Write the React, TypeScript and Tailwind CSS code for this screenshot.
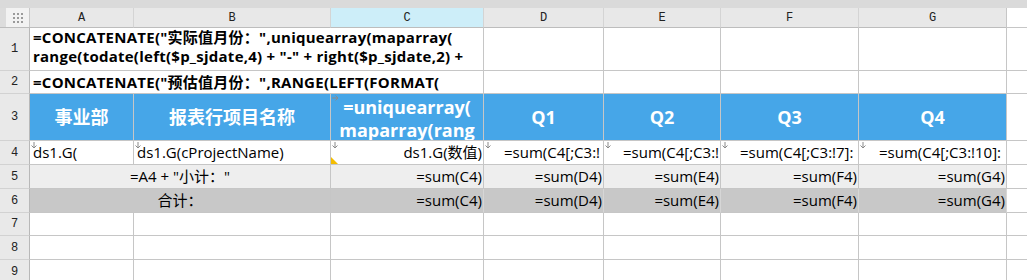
import React from "react";

const F = "font-['Open_Sans','Noto_Sans_CJK_SC',sans-serif]";
const HF = "font-['Liberation_Mono',monospace]";
const B = "border-r border-b border-[#c6c6c6]";

function Down() {
  return (
    <svg className="absolute left-[1px] top-[1px]" width="6" height="7" viewBox="0 0 6 7">
      <path d="M3 0V6M0.5 3.5L3 6L5.5 3.5" stroke="#8a8a8a" strokeWidth="1" fill="none" />
    </svg>
  );
}
function Right() {
  return (
    <svg className="absolute left-[1px] top-[1px]" width="7" height="6" viewBox="0 0 7 6">
      <path d="M0 3H6M3.5 0.5L6 3L3.5 5.5" stroke="#8a8a8a" strokeWidth="1" fill="none" />
    </svg>
  );
}

function RowHead({ n }: { n: number }) {
  return (
    <div className={`bg-[#e9e9e9] border-r border-b border-r-[#b8b8b8] border-b-[#d2d2d2] flex items-center justify-center text-[12px] text-[#222] ${HF}`}>
      {n}
    </div>
  );
}

function ColHead({ l, sel }: { l: string; sel?: boolean }) {
  return (
    <div
      className={`${sel ? "bg-[#cdeef9]" : "bg-[#e8e8e8]"} border-r border-b border-r-[#d4d4d4] border-b-[#bdbdbd] flex items-center justify-center text-[12px] text-[#222] ${HF}`}
    >
      {l}
    </div>
  );
}

export default function App() {
  const widths = "grid-cols-[30px_104px_197px_153px_120px_117px_138px_148px_1fr]";
  return (
    <div className={`w-[1027px] h-[280px] overflow-hidden bg-white ${F}`}>
      <div className="h-[8px] bg-[#dadada]" />
      <div
        className={`grid ${widths} grid-rows-[20px_43px_23px_47px_24px_24px_24px_23px_24px_24px]`}
      >
        {/* header row */}
        <div className="bg-[#dcdcdc] border-b border-[#bdbdbd] flex">
          <div className="ml-[6px] flex-1 bg-[#f2f2f2] border-r border-[#c8c8c8] flex items-center justify-center">
            <svg width="12" height="10" viewBox="0 0 12 10">
              {[0, 4, 8].map((x) =>
                [0, 4, 8].map((y) => (
                  <rect key={`${x}-${y}`} x={x + 1} y={y} width="2" height="2" fill="#9a9a9a" />
                ))
              )}
            </svg>
          </div>
        </div>
        <ColHead l="A" />
        <ColHead l="B" />
        <ColHead l="C" sel />
        <ColHead l="D" />
        <ColHead l="E" />
        <ColHead l="F" />
        <ColHead l="G" />
        <div className="bg-white border-b border-l border-[#c6c6c6] -ml-px" />

        {/* row 1 */}
        <RowHead n={1} />
        <div className={`col-span-3 ${B} overflow-hidden flex flex-col justify-center pl-[3px] pb-[4px] text-[15px] leading-[19px] tracking-[0.25px] font-bold text-black whitespace-nowrap`}>
          <div>=CONCATENATE("实际值月份：",uniquearray(maparray(</div>
          <div>range(todate(left($p_sjdate,4) + "-" + right($p_sjdate,2) +</div>
        </div>
        <div className={B} />
        <div className={B} />
        <div className={B} />
        <div className={B} />
        <div className="border-b border-[#c6c6c6]" />

        {/* row 2 */}
        <RowHead n={2} />
        <div className={`col-span-3 ${B} overflow-hidden flex items-center pl-[3px] text-[15px] tracking-[0.25px] font-bold text-black whitespace-nowrap`}>
          =CONCATENATE("预估值月份：",RANGE(LEFT(FORMAT(
        </div>
        <div className={B} />
        <div className={B} />
        <div className={B} />
        <div className={B} />
        <div className="border-b border-[#c6c6c6]" />

        {/* row 3 */}
        <RowHead n={3} />
        {["事业部", "报表行项目名称"].map((t) => (
          <div key={t} className={`${B} bg-[#46a6e8] flex items-center justify-center text-white font-bold text-[18px]`}>
            {t}
          </div>
        ))}
        <div className={`${B} bg-[#46a6e8] relative overflow-hidden text-white font-bold text-[18px] leading-[23px] text-center whitespace-nowrap pt-[2px]`}>
          <Right />
          <div>=uniquearray(</div>
          <div>maparray(rang</div>
        </div>
        {["Q1", "Q2", "Q3", "Q4"].map((t) => (
          <div key={t} className={`${B} bg-[#46a6e8] flex items-center justify-center text-white font-bold text-[18px]`}>
            {t}
          </div>
        ))}
        <div className="border-b border-[#c6c6c6]" />

        {/* row 4 */}
        <RowHead n={4} />
        <div className={`${B} relative flex items-center pl-[3px] text-[15px] text-black whitespace-nowrap`}>
          <Down />
          ds1.G(
        </div>
        <div className={`${B} relative flex items-center pl-[3px] text-[15px] text-black whitespace-nowrap`}>
          <Down />
          ds1.G(cProjectName)
        </div>
        <div className={`${B} relative flex items-center justify-end pr-[1px] text-[15px] text-black whitespace-nowrap`}>
          <Down />
          <svg className="absolute left-0 bottom-0" width="7" height="7" viewBox="0 0 7 7">
            <path d="M0 0L7 7H0Z" fill="#f4bd00" />
          </svg>
          ds1.G(数值)
        </div>
        {[
          ["=sum(C4[;C3:!", "pl-[20px]"],
          ["=sum(C4[;C3:!", "pl-[19px]"],
          ["=sum(C4[;C3:!7]:", "pl-[19px]"],
          ["=sum(C4[;C3:!10]:", "pl-[20px]"],
        ].map(([t, p], i) => (
          <div key={i} className={`${B} relative overflow-hidden flex items-center ${p} text-[15px] text-black whitespace-nowrap`}>
            <Down />
            {t}
          </div>
        ))}
        <div className="border-b border-[#c6c6c6]" />

        {/* row 5 */}
        <RowHead n={5} />
        <div className={`col-span-2 ${B} bg-[#eeeeee] flex items-center justify-center text-[15px] text-black whitespace-nowrap`}>
          =A4 + "小计："
        </div>
        {["C4", "D4", "E4", "F4", "G4"].map((c) => (
          <div key={c} className={`${B} bg-[#eeeeee] flex items-center justify-end pr-[1px] text-[15px] text-black`}>
            =sum({c})
          </div>
        ))}
        <div className="border-b border-[#c6c6c6]" />

        {/* row 6 */}
        <RowHead n={6} />
        <div className={`col-span-2 ${B} bg-[#c8c8c8] flex items-center justify-center text-[15px] text-black whitespace-nowrap`}>
          合计：
        </div>
        {["C4", "D4", "E4", "F4", "G4"].map((c) => (
          <div key={c} className={`border-r border-b border-r-[#d6d6d6] border-b-[#c6c6c6] bg-[#c8c8c8] flex items-center justify-end pr-[1px] text-[15px] text-black`}>
            =sum({c})
          </div>
        ))}
        <div className="border-b border-[#c6c6c6]" />

        {/* rows 7-9 */}
        {[7, 8, 9].map((n) => (
          <React.Fragment key={n}>
            <RowHead n={n} />
            <div className={B} />
            <div className={B} />
            <div className={B} />
            <div className={B} />
            <div className={B} />
            <div className={B} />
            <div className={B} />
            <div className="border-b border-[#c6c6c6]" />
          </React.Fragment>
        ))}
      </div>
    </div>
  );
}
